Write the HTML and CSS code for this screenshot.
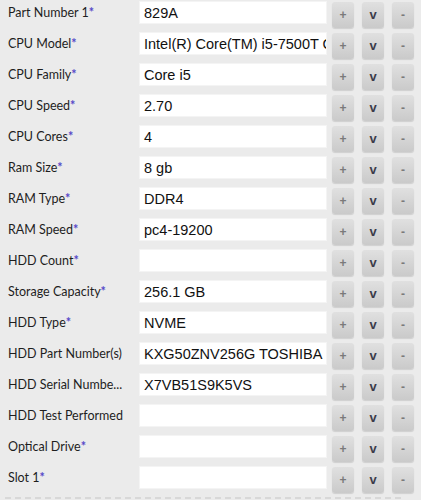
FILE: index.html
```html
<!DOCTYPE html>
<html lang="en">
<head>
    <meta charset="UTF-8">
    <meta name="viewport" content="width=device-width, initial-scale=1.0">
    <title>Specs</title>
    <link rel="stylesheet" href="styles.css">
</head>
<body>
    <div class="spec-list">
        <div class="spec-row">
            <label>Part Number 1<span class="req">*</span></label>
            <div class="field">829A</div>
            <div class="actions"><button>+</button><button class="v">v</button><button>-</button></div>
        </div>
        <div class="spec-row">
            <label>CPU Model<span class="req">*</span></label>
            <div class="field">Intel(R) Core(TM) i5-7500T C</div>
            <div class="actions"><button>+</button><button class="v">v</button><button>-</button></div>
        </div>
        <div class="spec-row">
            <label>CPU Family<span class="req">*</span></label>
            <div class="field">Core i5</div>
            <div class="actions"><button>+</button><button class="v">v</button><button>-</button></div>
        </div>
        <div class="spec-row">
            <label>CPU Speed<span class="req">*</span></label>
            <div class="field">2.70</div>
            <div class="actions"><button>+</button><button class="v">v</button><button>-</button></div>
        </div>
        <div class="spec-row">
            <label>CPU Cores<span class="req">*</span></label>
            <div class="field">4</div>
            <div class="actions"><button>+</button><button class="v">v</button><button>-</button></div>
        </div>
        <div class="spec-row">
            <label>Ram Size<span class="req">*</span></label>
            <div class="field">8 gb</div>
            <div class="actions"><button>+</button><button class="v">v</button><button>-</button></div>
        </div>
        <div class="spec-row">
            <label>RAM Type<span class="req">*</span></label>
            <div class="field">DDR4</div>
            <div class="actions"><button>+</button><button class="v">v</button><button>-</button></div>
        </div>
        <div class="spec-row">
            <label>RAM Speed<span class="req">*</span></label>
            <div class="field">pc4-19200</div>
            <div class="actions"><button>+</button><button class="v">v</button><button>-</button></div>
        </div>
        <div class="spec-row">
            <label>HDD Count<span class="req">*</span></label>
            <div class="field"></div>
            <div class="actions"><button>+</button><button class="v">v</button><button>-</button></div>
        </div>
        <div class="spec-row">
            <label>Storage Capacity<span class="req">*</span></label>
            <div class="field">256.1 GB</div>
            <div class="actions"><button>+</button><button class="v">v</button><button>-</button></div>
        </div>
        <div class="spec-row">
            <label>HDD Type<span class="req">*</span></label>
            <div class="field">NVME</div>
            <div class="actions"><button>+</button><button class="v">v</button><button>-</button></div>
        </div>
        <div class="spec-row">
            <label>HDD Part Number(s)</label>
            <div class="field">KXG50ZNV256G TOSHIBA</div>
            <div class="actions"><button>+</button><button class="v">v</button><button>-</button></div>
        </div>
        <div class="spec-row">
            <label>HDD Serial Numbe...</label>
            <div class="field">X7VB51S9K5VS</div>
            <div class="actions"><button>+</button><button class="v">v</button><button>-</button></div>
        </div>
        <div class="spec-row">
            <label>HDD Test Performed</label>
            <div class="field"></div>
            <div class="actions"><button>+</button><button class="v">v</button><button>-</button></div>
        </div>
        <div class="spec-row">
            <label>Optical Drive<span class="req">*</span></label>
            <div class="field"></div>
            <div class="actions"><button>+</button><button class="v">v</button><button>-</button></div>
        </div>
        <div class="spec-row">
            <label>Slot 1<span class="req">*</span></label>
            <div class="field"></div>
            <div class="actions"><button>+</button><button class="v">v</button><button>-</button></div>
        </div>
        <div class="divider"></div>
    </div>
</body>
</html>
```

FILE: styles.css
```css
body {
    margin: 0;
    background-color: #ebebeb;
    font-family: Lato, "Open Sans", sans-serif;
    overflow: hidden;
}

.spec-list {
    display: flex;
    flex-direction: column;
    padding-top: 1px;
}

.spec-row {
    display: flex;
    align-items: flex-start;
    height: 31px;
}

.spec-row label {
    width: 131px;
    padding-left: 8px;
    font-size: 12.5px;
    line-height: 24px;
    color: #1e1e1e;
    white-space: nowrap;
}

.req {
    color: #5548c8;
    font-weight: bold;
}

.field {
    width: 188px;
    height: 23px;
    padding-left: 4px;
    background: #fff;
    border: 1px solid #f4f4f4;
    box-sizing: border-box;
    font-family: "Liberation Sans", Arial, sans-serif;
    font-size: 14.5px;
    line-height: 22px;
    color: #111;
    white-space: nowrap;
    overflow: hidden;
}

.actions {
    display: flex;
    gap: 8px;
    margin-left: 5px;
    padding-top: 1px;
}

.actions button {
    width: 22px;
    height: 26px;
    padding: 0;
    border: none;
    border-radius: 3px;
    background: linear-gradient(#e0e0e0, #cacaca);
    box-shadow: 0 1px 1px rgba(0, 0, 0, 0.12);
    font-family: "Liberation Sans", Arial, sans-serif;
    font-size: 12px;
    line-height: 26px;
    font-weight: bold;
    color: #7a7a7a;
    cursor: pointer;
}

.actions button.v {
    font-size: 13px;
    color: #3c3c4a;
}

.divider {
    margin: 0 20px 0 5px;
    border-top: 2px dashed #d8d8d8;
}
```
